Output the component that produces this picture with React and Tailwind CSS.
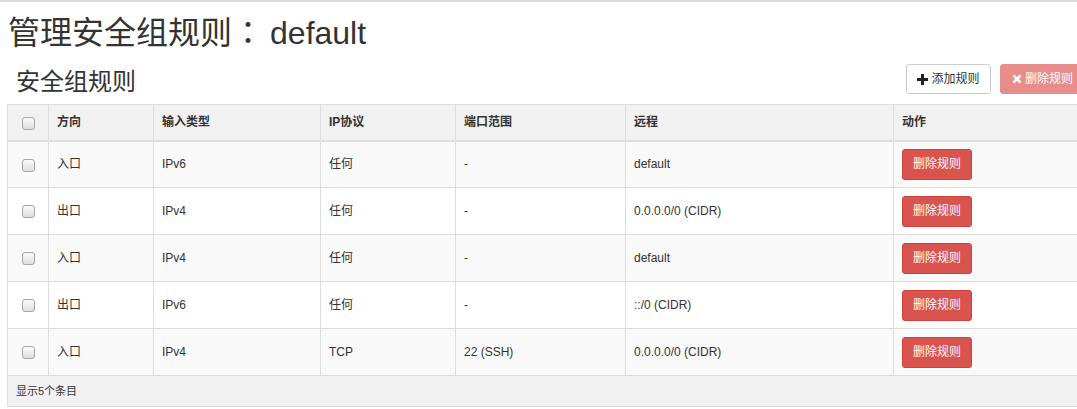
import React from "react";

const rows = [
  ["入口", "IPv6", "任何", "-", "default"],
  ["出口", "IPv4", "任何", "-", "0.0.0.0/0 (CIDR)"],
  ["入口", "IPv4", "任何", "-", "default"],
  ["出口", "IPv6", "任何", "-", "::/0 (CIDR)"],
  ["入口", "IPv4", "TCP", "22 (SSH)", "0.0.0.0/0 (CIDR)"],
];

const font = { fontFamily: '"Liberation Sans", "Noto Sans CJK SC", sans-serif' };

function Check() {
  return (
    <span className="inline-block w-[13px] h-[13px] rounded-[3px] border border-[#a6a6a6] bg-gradient-to-b from-[#fbfbfb] to-[#dedede] align-middle" />
  );
}

export default function App() {
  return (
    <div className="w-[1077px] h-[409px] overflow-hidden bg-white text-[#333] border-t-2 border-[#dcdcdc]" style={font}>
      <h1
        className="pl-[8px] pt-[9px] text-[32px] leading-[38px] text-[#333]"
        style={{ fontFamily: '"Noto Sans", "Noto Sans CJK SC", sans-serif' }}
      >
        管理安全组规则<span style={{ fontFamily: '"Noto Sans CJK TC", sans-serif' }}>：</span>
        <span className="ml-[6px]" style={{ fontFamily: '"Liberation Sans", sans-serif' }}>default</span>
      </h1>
      <div className="flex items-start mt-[12px]">
        <h2 className="pl-[16px] pt-[1px] text-[24px] leading-[30px] text-[#333] w-[906px] shrink-0" style={{ fontFamily: '"Noto Sans CJK SC", sans-serif' }}>
          安全组规则
        </h2>
        <button className="h-[30px] w-[85px] rounded-[3px] border border-[#ccc] bg-white text-[12px] text-[#333] flex items-center justify-center gap-[3px] shrink-0">
          <svg width="11" height="11" viewBox="0 0 11 11"><path d="M4 0h3v4h4v3H7v4H4V7H0V4h4z" fill="#222" /></svg>
          添加规则
        </button>
        <button className="ml-[9px] h-[30px] w-[90px] rounded-[3px] border border-[#e58d8a] bg-[#e78d8a] text-[12px] text-white flex items-center pl-[11px] gap-[3px] shrink-0">
          <svg width="10" height="10" viewBox="0 0 10 10"><path d="M1.5 1.5l7 7M8.5 1.5l-7 7" stroke="#fff" strokeWidth="2.6" /></svg>
          删除规则
        </button>
      </div>
      <div className="ml-[7px] mt-[9px] w-[1090px]">
        <table className="table-fixed border-collapse w-[1090px] text-[12px]">
          <colgroup>
            <col className="w-[41px]" />
            <col className="w-[105px]" />
            <col className="w-[167px]" />
            <col className="w-[135px]" />
            <col className="w-[170px]" />
            <col className="w-[268px]" />
            <col />
          </colgroup>
          <thead>
            <tr className="bg-[#f1f1f1] h-[36px]">
              <th className="border border-[#ddd] border-b-2 text-center"><Check /></th>
              {["方向", "输入类型", "IP协议", "端口范围", "远程", "动作"].map((h) => (
                <th key={h} className="border border-[#ddd] border-b-2 text-left font-bold px-[8px]">{h}</th>
              ))}
            </tr>
          </thead>
          <tbody>
            {rows.map((r, i) => (
              <tr key={i} className={i % 2 === 0 ? "bg-[#f9f9f9] h-[47px]" : "bg-white h-[47px]"}>
                <td className="border border-[#ddd] text-center"><Check /></td>
                {r.map((c, j) => (
                  <td key={j} className="border border-[#ddd] px-[8px]">{c}</td>
                ))}
                <td className="border border-[#ddd] px-[8px]">
                  <button className="h-[31px] w-[70px] rounded-[3px] border border-[#d43f3a] bg-[#d9534f] text-white text-[12px] block">
                    删除规则
                  </button>
                </td>
              </tr>
            ))}
            <tr className="bg-[#f1f1f1] h-[31px]">
              <td colSpan={7} className="border border-[#ddd] px-[8px] text-[11px]">显示5个条目</td>
            </tr>
          </tbody>
        </table>
      </div>
    </div>
  );
}
